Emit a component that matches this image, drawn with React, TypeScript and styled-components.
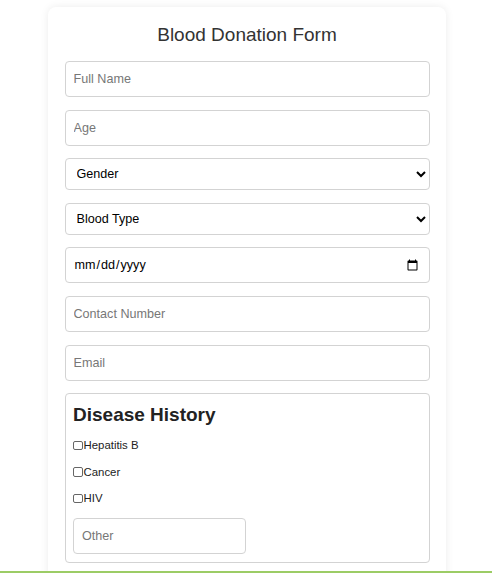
import React from "react";
import styled, { createGlobalStyle } from "styled-components";

const GlobalStyle = createGlobalStyle`
  html, body {
    margin: 0;
    padding: 0;
    background: #fff;
    font-family: "Liberation Sans", Arial, sans-serif;
  }
`;

const Page = styled.div`
  padding: 7px 0 0 2px;
`;

const Card = styled.form`
  width: 398px;
  box-sizing: border-box;
  margin: 0 auto;
  padding: 17px 16.5px 20px;
  background: #fff;
  border-radius: 8px;
  box-shadow: 0 0 9px rgba(0, 0, 0, 0.08);
  display: flex;
  flex-direction: column;
`;

const Title = styled.h2`
  margin: 0 0 15px;
  font-size: 19px;
  line-height: 22px;
  font-weight: 400;
  color: #333;
  text-align: center;
`;

const Fields = styled.div`
  display: flex;
  flex-direction: column;
  gap: 12.6px;
`;

const Input = styled.input<{ $width?: number }>`
  box-sizing: border-box;
  width: ${(p) => (p.$width ? `${p.$width}px` : "100%")};
  height: 36px;
  padding: 0 8px;
  border: 1px solid #d3d3d3;
  border-radius: 4px;
  font-family: "Liberation Sans", Arial, sans-serif;
  font-size: 12.6px;
  color: #000;
  background: #fff;

  &::placeholder {
    color: #777;
  }
`;

const Select = styled.select`
  box-sizing: border-box;
  width: 100%;
  height: 32px;
  padding: 0 6px 0 7px;
  border: 1px solid #d3d3d3;
  border-radius: 4px;
  font-family: "Liberation Sans", Arial, sans-serif;
  font-size: 12.6px;
  color: #000;
  background: #fff;
`;

const DiseaseBox = styled.div`
  border: 1px solid #d3d3d3;
  border-radius: 4px;
  padding: 10px 7.5px 8px;
  display: flex;
  flex-direction: column;
  align-items: flex-start;
`;

const DiseaseTitle = styled.h3`
  margin: 0 0 13px;
  font-size: 19px;
  line-height: 22px;
  font-weight: 700;
  color: #222;
`;

const CheckRow = styled.label`
  display: flex;
  align-items: center;
  height: 13px;
  margin-bottom: 13.5px;
  font-size: 11.4px;
  line-height: 13px;
  color: #222;
`;

const Check = styled.input`
  appearance: none;
  width: 9.5px;
  height: 9.5px;
  margin: 0 1px 0 0;
  border: 1px solid #666;
  border-radius: 2px;
  background: #fff;
  box-sizing: border-box;
`;

const OtherWrap = styled.div`
  margin-top: -1px;
`;

const BottomLine = styled.div`
  position: fixed;
  left: 0;
  right: 0;
  bottom: 0;
  height: 2px;
  background: #9ccc65;
`;

const diseases = ["Hepatitis B", "Cancer", "HIV"];

export default function App() {
  return (
    <Page>
      <GlobalStyle />
      <Card onSubmit={(e) => e.preventDefault()}>
        <Title>Blood Donation Form</Title>
        <Fields>
          <Input type="text" placeholder="Full Name" />
          <Input type="number" placeholder="Age" />
          <Select defaultValue="">
            <option value="">Gender</option>
            <option value="male">Male</option>
            <option value="female">Female</option>
            <option value="other">Other</option>
          </Select>
          <Select defaultValue="">
            <option value="">Blood Type</option>
            <option>A+</option>
            <option>A-</option>
            <option>B+</option>
            <option>B-</option>
            <option>AB+</option>
            <option>AB-</option>
            <option>O+</option>
            <option>O-</option>
          </Select>
          <Input type="date" />
          <Input type="tel" placeholder="Contact Number" />
          <Input type="email" placeholder="Email" />
          <DiseaseBox>
            <DiseaseTitle>Disease History</DiseaseTitle>
            {diseases.map((d) => (
              <CheckRow key={d}>
                <Check type="checkbox" />
                {d}
              </CheckRow>
            ))}
            <OtherWrap>
              <Input type="text" placeholder="Other" $width={173} />
            </OtherWrap>
          </DiseaseBox>
        </Fields>
      </Card>
      <BottomLine />
    </Page>
  );
}
